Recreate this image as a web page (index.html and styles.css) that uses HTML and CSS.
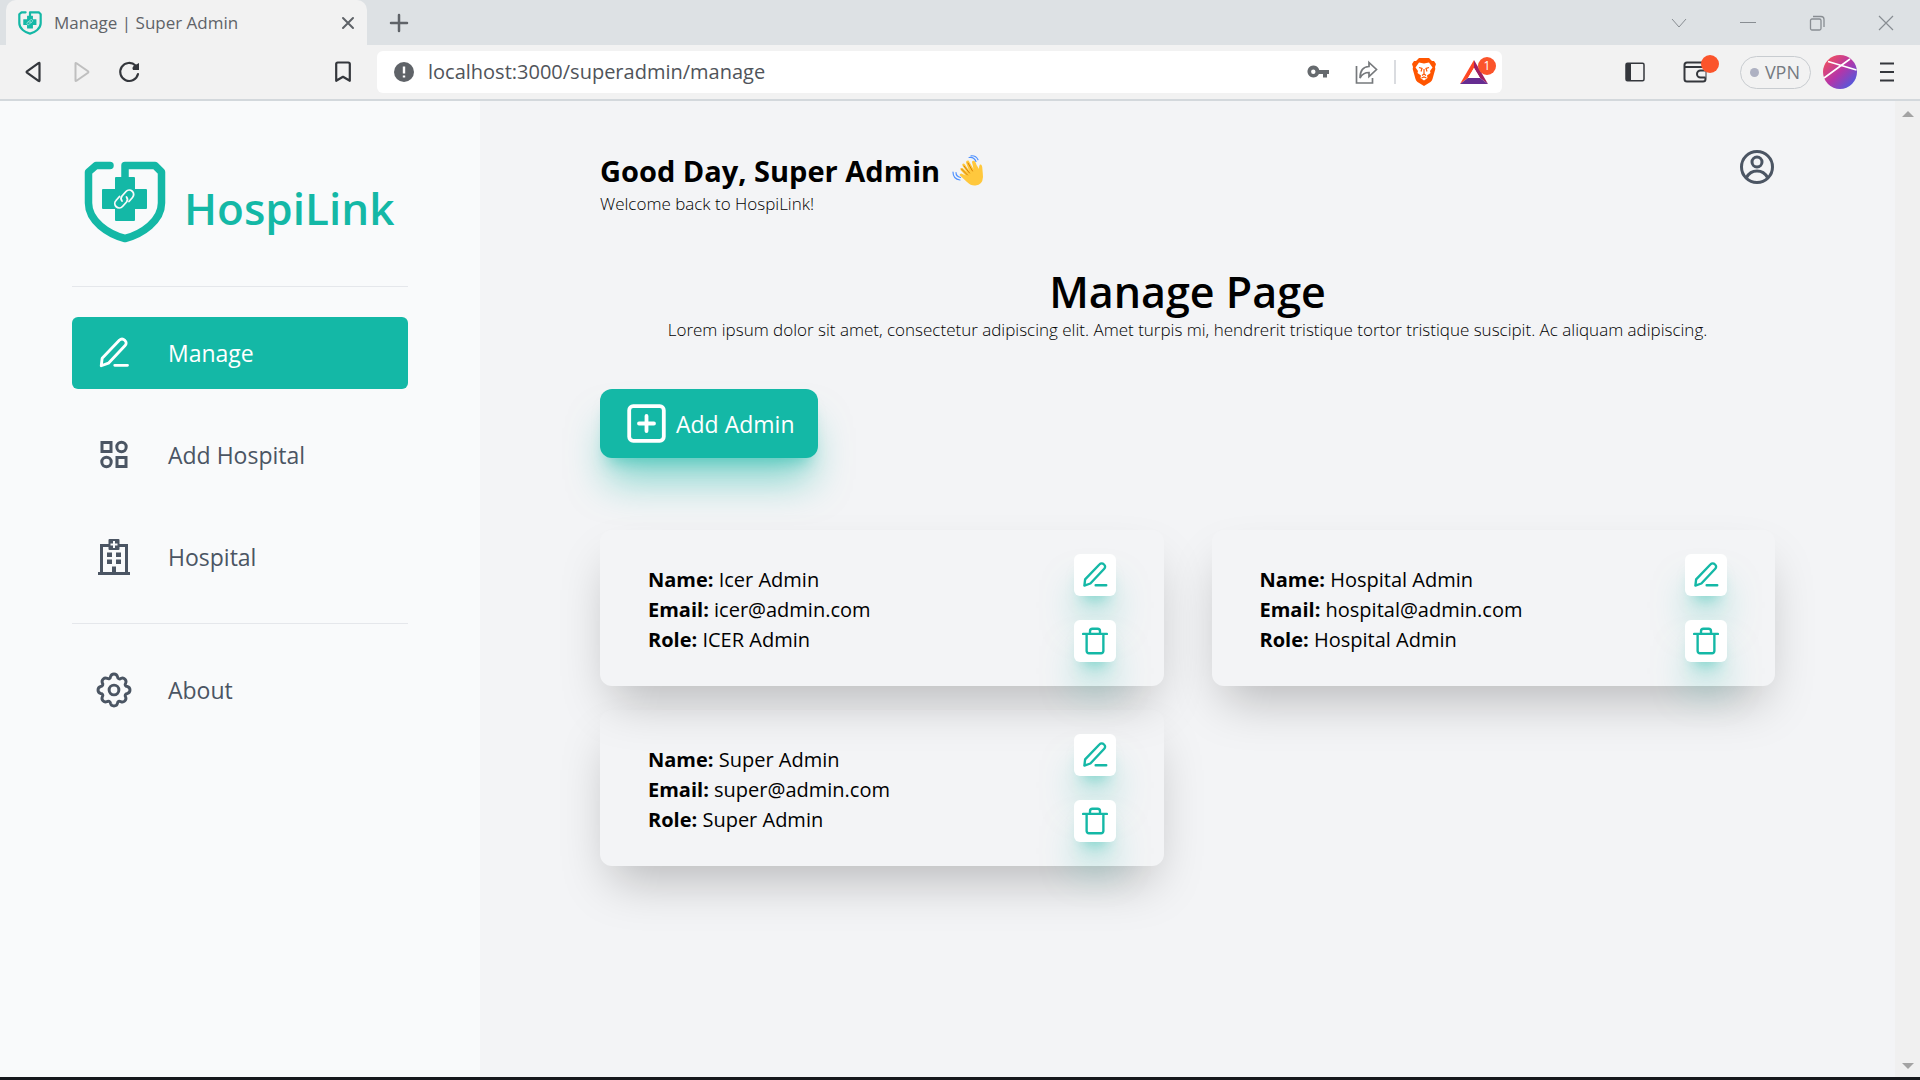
FILE: index.html
```html
<!DOCTYPE html>
<html lang="en">
<head>
<meta charset="utf-8">
<title>Manage | Super Admin</title>
<link rel="stylesheet" href="styles.css">
</head>
<body>
<svg class="sprite" aria-hidden="true">
  <symbol id="logo" viewBox="0 0 82 82">
    <path d="M26 4.500H12L4.500 11V42C4.500 60 24 73 41 77.500C58 73 77.500 60 77.500 42V11L71 4.500H41V20" fill="none" stroke="#14b8a6" stroke-width="7.500" stroke-linecap="round" stroke-linejoin="round"/>
    <path d="M32 16h18q1 0 1 1v11h11q1 0 1 1v18q0 1-1 1h-11v11q0 1-1 1h-18q-1 0-1-1v-11h-12q-1 0-1-1v-18q0-1 1-1h12v-11q0-1 1-1z" fill="#14b8a6"/>
    <g fill="none" stroke="#f9fafb" stroke-width="1.800" stroke-linecap="round">
      <path d="M38 40a4 4 0 0 1 0-5l4-4.500a4.300 4.300 0 0 1 6.500 6l-3.500 4"/>
      <path d="M42.500 36a4 4 0 0 1 0 5l-4 4.500a4.300 4.300 0 0 1-6.500-6l3.500-4"/>
    </g>
  </symbol>
  <symbol id="pen" viewBox="0 0 24 24">
    <path d="M3.500 20.500l.6-5L15.700 3.400a2.200 2.200 0 0 1 3.300 0l.4.400a2.200 2.200 0 0 1 0 3.200L8.300 18.800z M12.500 20.200h8.500" fill="none" stroke="currentColor" stroke-width="1.900" stroke-linecap="round" stroke-linejoin="round"/>
  </symbol>
  <symbol id="trash" viewBox="0 0 24 24">
    <path d="M2.500 6.300h19M5.300 6.300v13.700a1.800 1.800 0 0 0 1.800 1.800h9.800a1.800 1.800 0 0 0 1.800-1.800v-13.700M8 6v-1.800a2 2 0 0 1 2-2h4a2 2 0 0 1 2 2v1.800" fill="none" stroke="currentColor" stroke-width="1.900" stroke-linecap="round" stroke-linejoin="round"/>
  </symbol>
</svg>

<header class="browser">
  <div class="tabstrip">
    <div class="tab">
      <svg class="favicon"><use href="#logo"/></svg>
      <span class="tab-title">Manage | Super Admin</span>
      <button class="plain" aria-label="Close tab"><svg width="14" height="14" viewBox="0 0 14 14"><path d="M2 2l10 10M12 2L2 12" stroke="#5f6368" stroke-width="2" stroke-linecap="round"/></svg></button>
    </div>
    <button class="plain newtab" aria-label="New tab"><svg width="20" height="20" viewBox="0 0 20 20"><path d="M10 2v16M2 10h16" stroke="#5f6368" stroke-width="2.500" stroke-linecap="round"/></svg></button>
    <div class="window-controls">
      <button class="plain" aria-label="Search tabs"><svg width="16" height="16" viewBox="0 0 16 16"><path d="M1 4l7 8 7-8" fill="none" stroke="#888d92"/></svg></button>
      <button class="plain" aria-label="Minimize"><svg width="16" height="16" viewBox="0 0 16 16"><path d="M0 7.500h16" stroke="#888d92"/></svg></button>
      <button class="plain" aria-label="Restore"><svg width="16" height="16" viewBox="0 0 16 16"><g fill="none" stroke="#888d92" stroke-width="1.300"><rect x="1.500" y="4" width="10.500" height="11" rx="1.500"/><path d="M4 1.500h8a3 3 0 0 1 3 3v7.500"/></g></svg></button>
      <button class="plain" aria-label="Close"><svg width="16" height="16" viewBox="0 0 16 16"><path d="M1 1l14 14M15 1L1 15" stroke="#888d92" stroke-width="1.200"/></svg></button>
    </div>
  </div>
  <div class="toolbar">
    <div class="nav-buttons">
      <button class="plain" aria-label="Back"><svg width="24" height="24" viewBox="0 0 24 24"><path d="M17.500 3.500v17q0 1-1 .300L5 12.700q-.800-.700 0-1.400L16.500 3.200q1-.700 1 .300z" fill="none" stroke="#34373c" stroke-width="2.200"/></svg></button>
      <button class="plain" aria-label="Forward"><svg width="24" height="24" viewBox="0 0 24 24"><path d="M5.500 3.500v17q0 1 1 .300L18 12.700q.800-.700 0-1.400L6.500 3.200q-1-.700-1 .300z" fill="none" stroke="#bfbfbf" stroke-width="2"/></svg></button>
      <button class="plain" aria-label="Reload"><svg width="24" height="24" viewBox="0 0 24 24"><path d="M20 14a9 9 0 1 1-2.500-8.500" fill="none" stroke="#34373c" stroke-width="2.200" stroke-linecap="round"/><path d="M21 3v7h-6q-1.500-2 .500-4z" fill="#34373c"/></svg></button>
    </div>
    <button class="plain bookmark" aria-label="Bookmark"><svg width="18" height="22" viewBox="0 0 18 22"><path d="M2.200 3q0-1.500 1.500-1.500h10.600q1.500 0 1.500 1.500v16.800L9 15.800l-6.800 4z" fill="none" stroke="#34373c" stroke-width="2.200" stroke-linejoin="round"/></svg></button>
    <div class="address">
      <svg width="20" height="20" viewBox="0 0 20 20"><circle cx="10" cy="10" r="10" fill="#5f6368"/><path d="M10 4.500v7M10 13.500v2" stroke="#fff" stroke-width="2.400"/></svg>
      <input class="url" type="text" aria-label="Address" value="localhost:3000/superadmin/manage">
      <button class="plain" aria-label="Passwords"><svg width="24" height="20" viewBox="0 0 24 20"><path d="M7.500 3.500a6 6 0 1 1-.100 0zM12 8h11v4h-2v3.500h-4V12h-5z" fill="#666a6e"/><circle cx="7.300" cy="9.800" r="2.200" fill="#fff"/></svg></button>
      <button class="plain" aria-label="Share"><svg width="24" height="26" viewBox="0 0 24 26"><path d="M2.500 7v17h16v-5" fill="none" stroke="#76797c" stroke-width="1.700"/><path d="M15 3.500l7.500 7-7.500 7v-4q-6 0-9 5.500 0-11 9-11.500z" fill="none" stroke="#76797c" stroke-width="1.700"/></svg></button>
      <span class="separator"></span>
      <button class="plain" aria-label="Shields"><svg width="24" height="28" viewBox="0 0 24 28"><path d="M7 0h10l3 3 2 0 2 3-1 3 .300 2-2.800 10q-.600 2-2 3L12 28l-6.500-4q-1.400-1-2-3L.7 11 1 9 0 6l2-3h2z" fill="#ff5500"/><path d="M7 4.500l5 1 5-1 3.500 5-2.500 3.500.500 2-3.500 2.500.500 2.500-3.500 2.500L8.500 20l.500-2.500L5.500 15l.500-2L3.500 9.500z" fill="#fff"/><path d="M7 9.500l3 1-1 3M17 9.500l-3 1 1 3M12 11v5l-2 1.500M12 16l2 1.500M9.500 20l2.500-1 2.500 1" fill="none" stroke="#ff5500" stroke-width="1.200"/></svg></button>
      <button class="plain rewards" aria-label="Rewards"><svg width="28" height="24" viewBox="0 0 28 24"><path d="M14 0L0 24l8-6 6-10z" fill="#ff4724"/><path d="M14 0l14 24-8-6-6-10z" fill="#9e1f63"/><path d="M0 24h28l-8-6H8z" fill="#662d91"/><path d="M14 8l6 10H8z" fill="#fff"/></svg><span class="badge">1</span></button>
    </div>
    <div class="tools">
      <button class="plain" aria-label="Sidebar"><svg width="20" height="20" viewBox="0 0 20 20"><rect x="1" y="1.200" width="18" height="17.600" rx="1.500" fill="none" stroke="#34373c" stroke-width="1.500"/><path d="M1 2h5v16H1z" fill="#34373c"/></svg></button>
      <button class="plain wallet" aria-label="Wallet"><svg width="24" height="22" viewBox="0 0 24 22"><path d="M1.500 4q0-2.500 2.500-2.500h16q2.500 0 2.500 2.500v14q0 2.500-2.500 2.500H4q-2.500 0-2.500-2.500zM2 6h20" fill="none" stroke="#34373c" stroke-width="2"/><path d="M22.500 9.500h-5a3.500 3.500 0 0 0 0 7h5" fill="#f2f2f2" stroke="#34373c" stroke-width="2"/></svg><span class="dot"></span></button>
      <button class="vpn"><span class="vpn-dot"></span>VPN</button>
      <button class="plain profile" aria-label="Profile"><svg width="34" height="34" viewBox="0 0 34 34"><defs><linearGradient id="pg" x1="0" y1="0" x2="1" y2="1"><stop offset=".1" stop-color="#f0505f"/><stop offset=".5" stop-color="#b535a8"/><stop offset=".9" stop-color="#4b5be0"/></linearGradient></defs><circle cx="17" cy="17" r="17" fill="url(#pg)"/><path d="M5 6.500L33.500 15M1 23L27 4" stroke="#fff" stroke-width="1.600"/></svg></button>
      <button class="plain" aria-label="Menu"><svg width="16" height="20" viewBox="0 0 16 20"><path d="M1 1.500h14M1 10h14M1 18.500h14" stroke="#34373c" stroke-width="2"/></svg></button>
    </div>
  </div>
</header>

<div class="app">
  <aside class="sidebar">
    <a class="brand" href="#"><svg class="brand-logo"><use href="#logo"/></svg><span>HospiLink</span></a>
    <nav class="menu">
      <a class="menu-item active" href="#"><svg width="36" height="36"><use href="#pen"/></svg>Manage</a>
      <a class="menu-item" href="#"><svg width="36" height="36" viewBox="0 0 36 36"><g fill="none" stroke="currentColor" stroke-width="3"><rect x="6" y="5.500" width="9" height="9"/><circle cx="25.500" cy="10" r="4.700"/><circle cx="10.500" cy="25" r="4.700"/><rect x="21" y="20.500" width="9" height="9"/></g></svg>Add Hospital</a>
      <a class="menu-item" href="#"><svg width="36" height="36" viewBox="0 0 36 36"><path d="M2 34.500h32" stroke="currentColor" stroke-width="3"/><path d="M5.500 34V6.500h25V34" fill="none" stroke="currentColor" stroke-width="3"/><rect x="12.500" y="0" width="11" height="11" rx="1" fill="currentColor"/><path d="M18 2v7M14.500 5.500h7" stroke="#f9fafb" stroke-width="2"/><path d="M11 13.500h5v4.500h-5zM20 13.500h5v4.500h-5zM11 20.500h5v4.500h-5zM20 20.500h5v4.500h-5zM16 27.500h4v7h-4z" fill="currentColor"/></svg>Hospital</a>
      <hr>
      <a class="menu-item" href="#"><svg width="36" height="36" viewBox="1 1 34 34"><path d="M14.700 5.500a3.400 3.400 0 0 1 6.600 0c.3 1.900 1.900 2.600 3.400 1.500a3.400 3.400 0 0 1 4.300 4.600c-1 1.500-.3 3 1.500 3.100a3.400 3.400 0 0 1 0 6.600c-1.800.3-2.500 1.900-1.500 3.400a3.400 3.400 0 0 1-4.600 4.300c-1.500-1-3-.3-3.100 1.500a3.400 3.400 0 0 1-6.600 0c-.3-1.800-1.900-2.500-3.400-1.500a3.400 3.400 0 0 1-4.300-4.600c1-1.500.3-3-1.500-3.100a3.400 3.400 0 0 1 0-6.600c1.800-.3 2.500-1.900 1.500-3.400a3.400 3.400 0 0 1 4.600-4.300c1.500 1 3 .3 3.100-1.500z" fill="none" stroke="currentColor" stroke-width="2.800"/><circle cx="18" cy="18" r="4.600" fill="none" stroke="currentColor" stroke-width="2.800"/></svg>About</a>
    </nav>
  </aside>

  <main class="content">
    <div class="welcome">
      <div>
        <h1>Good Day, Super Admin
          <svg width="32" height="32" viewBox="0 0 32 32"><path d="M10 9.500q1.500-2 3 0l4 6-3-8q0-2.500 2.500-2l5 8.500-1.500-7q.500-2 2.500-1 1.500 1.500 2 4l2.500 4q0-5 1.800-4.500 1.500.500 1.600 4.500.500 5 .600 8-.500 8-7.500 8.500-4.500.500-8.500-3.500l-7-6.500q-1-2 1.500-2l4 2-5-5.500q-.500-2.500 2-2l4.500 4-4-5.500q-1-1.500-.500-2z" fill="#ffc83d"/><path d="M12 11l5.500 7M9.500 14l6 6M16 8l4.500 8" stroke="#d67d00" stroke-width="1" stroke-linecap="round"/><path d="M17 2.500q5-1 7 4M19 .800q5-.500 7 4M1 17q0 7 7 8M4 17.500q0 4 4.500 5" fill="none" stroke="#5092ff" stroke-width="1.200" stroke-linecap="round"/></svg>
        </h1>
        <p class="light">Welcome back to HospiLink!</p>
      </div>
      <button class="plain account" aria-label="Account"><svg width="36" height="36" viewBox="0 0 36 36"><g fill="none" stroke="currentColor" stroke-width="3"><circle cx="18" cy="18" r="15.500"/><circle cx="18" cy="13" r="5"/><path d="M7.500 28.500q3.500-6.500 10.500-6.500t10.500 6.500"/></g></svg></button>
    </div>

    <section class="intro">
      <h2>Manage Page</h2>
      <p class="light">Lorem ipsum dolor sit amet, consectetur adipiscing elit. Amet turpis mi, hendrerit tristique tortor tristique suscipit. Ac aliquam adipiscing.</p>
    </section>

    <button class="add"><svg width="39" height="39" viewBox="0 0 39 39"><g fill="none" stroke="#fff" stroke-width="3.800" stroke-linecap="round"><rect x="2.200" y="2.200" width="34.600" height="34.600" rx="4"/><path d="M19.500 12v15M12 19.500h15"/></g></svg>Add Admin</button>

    <section class="cards">
      <article class="card">
        <div class="details">
          <p><b>Name:</b> Icer Admin</p>
          <p><b>Email:</b> icer@admin.com</p>
          <p><b>Role:</b> ICER Admin</p>
        </div>
        <div class="actions">
          <button aria-label="Edit"><svg width="30" height="30"><use href="#pen"/></svg></button>
          <button aria-label="Delete"><svg width="30" height="30"><use href="#trash"/></svg></button>
        </div>
      </article>
      <article class="card">
        <div class="details">
          <p><b>Name:</b> Hospital Admin</p>
          <p><b>Email:</b> hospital@admin.com</p>
          <p><b>Role:</b> Hospital Admin</p>
        </div>
        <div class="actions">
          <button aria-label="Edit"><svg width="30" height="30"><use href="#pen"/></svg></button>
          <button aria-label="Delete"><svg width="30" height="30"><use href="#trash"/></svg></button>
        </div>
      </article>
      <article class="card">
        <div class="details">
          <p><b>Name:</b> Super Admin</p>
          <p><b>Email:</b> super@admin.com</p>
          <p><b>Role:</b> Super Admin</p>
        </div>
        <div class="actions">
          <button aria-label="Edit"><svg width="30" height="30"><use href="#pen"/></svg></button>
          <button aria-label="Delete"><svg width="30" height="30"><use href="#trash"/></svg></button>
        </div>
      </article>
    </section>
  </main>

  <div class="scrollbar" aria-hidden="true">
    <svg width="12" height="6" viewBox="0 0 12 6"><path d="M0 6l6-6 6 6z" fill="#a3a3a3"/></svg>
    <svg width="12" height="6" viewBox="0 0 12 6"><path d="M0 0l6 6 6-6z" fill="#a3a3a3"/></svg>
  </div>
</div>
</body>
</html>
```
FILE: styles.css
```css
* { box-sizing: border-box; margin: 0; padding: 0; }

body {
  display: flex;
  flex-direction: column;
  min-height: 100vh;
  font-family: "Open Sans", "Noto Sans", sans-serif;
  font-size: 20px;
  line-height: 30px;
  color: #000;
  background: #f3f4f6;
  border-bottom: 3px solid #16181c;
}

svg { display: block; flex: none; }
button { font: inherit; cursor: pointer; border: 0; }
a { color: inherit; text-decoration: none; }
.sprite { position: absolute; width: 0; height: 0; }
.plain { display: flex; align-items: center; justify-content: center; background: none; }

/* Browser frame */
.browser { border-bottom: 2px solid #d3d8dc; background: #f2f2f2; }
.tabstrip { display: flex; align-items: center; height: 45px; padding-left: 6px; background: #dde1e4; }
.tab {
  display: flex;
  align-items: center;
  gap: 12px;
  width: 361px;
  height: 45px;
  padding: 0 12px;
  border-radius: 10px 10px 0 0;
  background: #f2f2f2;
}
.favicon { width: 24px; height: 24px; }
.tab-title { flex: 1; font-size: 17px; font-weight: 500; color: #5f6368; }
.newtab { margin-left: 22px; }
.window-controls { display: flex; gap: 53px; margin-left: auto; padding-right: 26px; }

.toolbar { display: flex; align-items: center; height: 54px; }
.nav-buttons { display: flex; gap: 24px; width: 334px; padding-left: 22px; }
.bookmark { margin-right: 25px; }
.address {
  display: flex;
  align-items: center;
  gap: 24px;
  flex: 1;
  height: 42px;
  padding: 0 14px 0 17px;
  border-radius: 6px;
  background: #fff;
}
.url {
  flex: 1;
  min-width: 0;
  margin-left: -10px;
  border: 0;
  outline: 0;
  font: inherit;
  color: #50545a;
  background: none;
}
.separator { width: 2px; height: 24px; margin: 0 -8px; background: #dadce0; }
.rewards, .wallet { position: relative; }
.badge {
  position: absolute;
  top: -3px;
  right: -8px;
  width: 18px;
  height: 18px;
  border-radius: 9px;
  font-size: 12px;
  line-height: 18px;
  color: #fff;
  background: #fb542b;
}
.dot { position: absolute; top: -6px; right: -12px; width: 18px; height: 18px; border-radius: 9px; background: #fb542b; }
.tools { display: flex; align-items: center; justify-content: flex-end; gap: 38px; width: 418px; padding-right: 25px; }
.vpn {
  display: flex;
  align-items: center;
  gap: 6px;
  height: 33px;
  padding: 0 10px 0 9px;
  border: 1px solid #c8ccd0;
  border-radius: 17px;
  font-size: 18px;
  color: #757a80;
  background: none;
}
.vpn-dot { width: 9px; height: 9px; border-radius: 50%; background: #aeb1c2; }
.wallet { margin-right: -5px; }
.profile { margin: 0 -16px 0 -26px; }

/* Page */
.app { display: flex; flex: 1; }
.sidebar { width: 25%; padding: 0 72px; background: #f9fafb; }
.brand {
  display: flex;
  align-items: flex-start;
  gap: 18px;
  height: 186px;
  padding: 60px 0 0 12px;
  border-bottom: 1px solid #e5e7eb;
  font-size: 44px;
  font-weight: 600;
  line-height: 94px;
  color: #14b8a6;
}
.brand-logo { width: 82px; height: 82px; }
.menu { display: flex; flex-direction: column; gap: 30px; padding-top: 30px; }
.menu hr { border: 0; border-top: 1px solid #e5e7eb; }
.menu-item {
  display: flex;
  align-items: center;
  gap: 36px;
  height: 72px;
  padding-left: 24px;
  border-radius: 6px;
  font-size: 23px;
  color: #4b5563;
}
.menu-item.active { color: #fff; background: #14b8a6; }

.content { flex: 1; padding: 48px 120px; }
.welcome { display: flex; justify-content: space-between; align-items: flex-start; }
h1 { display: flex; align-items: center; gap: 12px; font-size: 29px; font-weight: 700; line-height: 44px; }
.light { font-size: 17px; font-weight: 300; line-height: 22px; }
.account { color: #4b5563; }
.intro { padding-top: 50px; text-align: center; }
h2 { font-size: 43px; font-weight: 600; line-height: 54px; }
.add {
  display: flex;
  align-items: center;
  gap: 10px;
  height: 69px;
  margin-top: 48px;
  padding: 0 24px 0 27px;
  border-radius: 12px;
  font-size: 23px;
  color: #fff;
  background: #14b8a6;
  box-shadow: 0 30px 38px -8px rgba(20, 184, 166, .5), 0 12px 15px -9px rgba(20, 184, 166, .5);
}
.cards { display: grid; grid-template-columns: 1fr 1fr; gap: 24px 48px; margin-top: 72px; }
.card {
  display: flex;
  justify-content: space-between;
  align-items: center;
  padding: 24px 48px;
  border-radius: 12px;
  box-shadow: 0 25px 50px -12px rgba(0, 0, 0, .25);
}
.details { padding-top: 3px; }
.actions { display: flex; flex-direction: column; gap: 24px; }
.actions button {
  display: grid;
  place-items: center;
  width: 42px;
  height: 42px;
  border-radius: 6px;
  color: #14b8a6;
  background: #fff;
  box-shadow: 0 30px 38px -8px rgba(20, 184, 166, .5), 0 12px 15px -9px rgba(20, 184, 166, .5);
}
.scrollbar {
  display: flex;
  flex-direction: column;
  align-items: center;
  justify-content: space-between;
  width: 25px;
  padding: 10px 0 8px;
  background: #f0f0f0;
}
```
